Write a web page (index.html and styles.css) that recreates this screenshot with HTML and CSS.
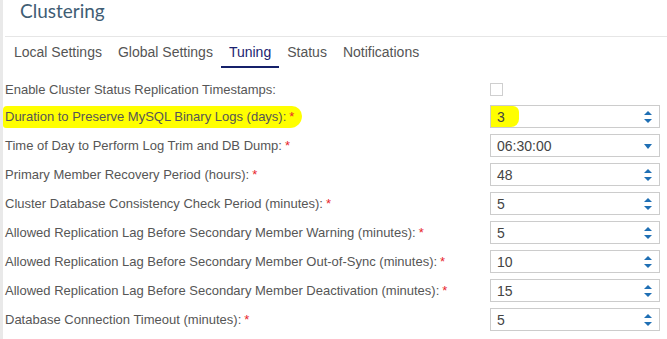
FILE: index.html
```html
<!DOCTYPE html>
<html>
<head>
    <title>Clustering</title>
    <link rel="stylesheet" href="styles.css">
</head>
<body>
    <div class="page">
        <div class="page-header">
            <h1>Clustering</h1>
        </div>
        <div class="tabs">
            <span class="tab">Local Settings</span>
            <span class="tab">Global Settings</span>
            <span class="tab active">Tuning</span>
            <span class="tab">Status</span>
            <span class="tab">Notifications</span>
        </div>
        <div class="settings">
            <div class="row row-check">
                <div class="label">Enable Cluster Status Replication Timestamps:</div>
                <div class="control"><span class="checkbox"></span></div>
            </div>
            <div class="row">
                <div class="label"><span class="marker">Duration to Preserve MySQL Binary Logs (days):<span class="req">*</span></span></div>
                <div class="control field">
                    <span class="value marked">3</span>
                    <svg class="spin" width="8" height="12" viewBox="0 0 8 12"><path d="M4 0L8 4H0Z M0 8H8L4 12Z" fill="#1f6fb4"/></svg>
                </div>
            </div>
            <div class="row">
                <div class="label">Time of Day to Perform Log Trim and DB Dump:<span class="req">*</span></div>
                <div class="control field">
                    <span class="value">06:30:00</span>
                    <svg class="spin" width="8" height="12" viewBox="0 0 8 12"><path d="M0 4H8L4 9Z" fill="#1f6fb4"/></svg>
                </div>
            </div>
            <div class="row">
                <div class="label">Primary Member Recovery Period (hours):<span class="req">*</span></div>
                <div class="control field">
                    <span class="value">48</span>
                    <svg class="spin" width="8" height="12" viewBox="0 0 8 12"><path d="M4 0L8 4H0Z M0 8H8L4 12Z" fill="#1f6fb4"/></svg>
                </div>
            </div>
            <div class="row">
                <div class="label">Cluster Database Consistency Check Period (minutes):<span class="req">*</span></div>
                <div class="control field">
                    <span class="value">5</span>
                    <svg class="spin" width="8" height="12" viewBox="0 0 8 12"><path d="M4 0L8 4H0Z M0 8H8L4 12Z" fill="#1f6fb4"/></svg>
                </div>
            </div>
            <div class="row">
                <div class="label">Allowed Replication Lag Before Secondary Member Warning (minutes):<span class="req">*</span></div>
                <div class="control field">
                    <span class="value">5</span>
                    <svg class="spin" width="8" height="12" viewBox="0 0 8 12"><path d="M4 0L8 4H0Z M0 8H8L4 12Z" fill="#1f6fb4"/></svg>
                </div>
            </div>
            <div class="row">
                <div class="label">Allowed Replication Lag Before Secondary Member Out-of-Sync (minutes):<span class="req">*</span></div>
                <div class="control field">
                    <span class="value">10</span>
                    <svg class="spin" width="8" height="12" viewBox="0 0 8 12"><path d="M4 0L8 4H0Z M0 8H8L4 12Z" fill="#1f6fb4"/></svg>
                </div>
            </div>
            <div class="row">
                <div class="label">Allowed Replication Lag Before Secondary Member Deactivation (minutes):<span class="req">*</span></div>
                <div class="control field">
                    <span class="value">15</span>
                    <svg class="spin" width="8" height="12" viewBox="0 0 8 12"><path d="M4 0L8 4H0Z M0 8H8L4 12Z" fill="#1f6fb4"/></svg>
                </div>
            </div>
            <div class="row">
                <div class="label">Database Connection Timeout (minutes):<span class="req">*</span></div>
                <div class="control field">
                    <span class="value">5</span>
                    <svg class="spin" width="8" height="12" viewBox="0 0 8 12"><path d="M4 0L8 4H0Z M0 8H8L4 12Z" fill="#1f6fb4"/></svg>
                </div>
            </div>
        </div>
    </div>
</body>
</html>
```

FILE: styles.css
```css
body {
    margin: 0;
    font-family: "Liberation Sans", Arial, sans-serif;
    background-color: #fff;
    overflow: hidden;
}
.page {
    border-left: 3px solid #e9e9e9;
    min-height: 339px;
}
.page-header {
    height: 36px;
    border-bottom: 1px solid #e6e6e6;
    margin-left: 2px;
}
.page-header h1 {
    margin: 0 0 0 15px;
    font-family: Lato, "Open Sans", sans-serif;
    font-weight: normal;
    font-size: 19px;
    line-height: 21px;
    color: #3f5d74;
}
.tabs {
    display: flex;
    padding: 7px 0 0 3px;
}
.tab {
    font-size: 14px;
    line-height: 16px;
    color: #555;
    padding: 0 8px 6px 8px;
    border-bottom: 2px solid transparent;
}
.tab.active {
    color: #1b2370;
    border-bottom-color: #15206a;
}
.settings {
    padding: 12px 0 0 2px;
}
.row {
    display: flex;
    align-items: center;
    height: 23px;
    margin-bottom: 6px;
}
.row-check {
    height: 19px;
}
.label {
    flex: 0 0 485px;
    font-size: 13px;
    color: #565656;
    white-space: nowrap;
}
.req {
    color: #e8262c;
    margin-left: 3px;
}
.marker {
    background-color: #ffff00;
    padding: 3px 8px 4px 2px;
    margin-left: -2px;
    border-radius: 4px 10px 12px 3px;
}
.control {
    width: 170px;
}
.checkbox {
    display: block;
    width: 11px;
    height: 11px;
    border: 1px solid #cfcfcf;
}
.field {
    box-sizing: border-box;
    height: 23px;
    border: 1px solid #cccccc;
    display: flex;
    align-items: center;
    justify-content: space-between;
    padding: 0 7px 0 6px;
}
.value {
    font-size: 14px;
    color: #444;
}
.marked {
    background-color: #ffff00;
    margin-left: -6px;
    padding: 3px 14px 2px 6px;
    border-radius: 0 6px 8px 0;
}
.spin {
    display: block;
}
```
